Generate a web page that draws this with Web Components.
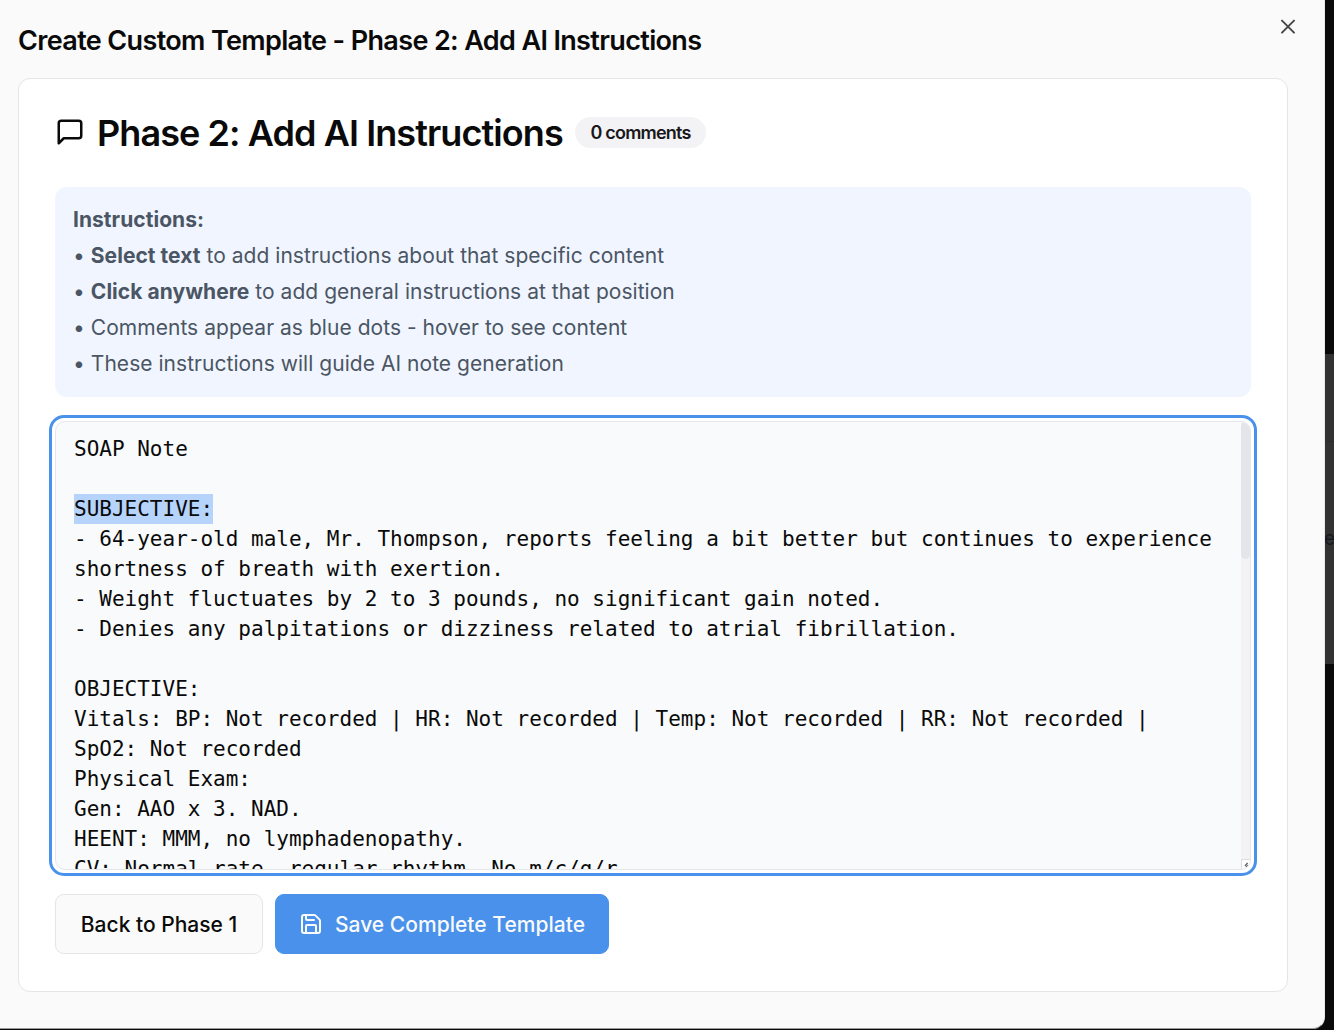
<!DOCTYPE html>
<html lang="en">
<head>
<meta charset="utf-8">
<title>Create Custom Template</title>
<style>
html,body{margin:0;height:1030px;overflow:hidden;background:#0a0a0a;font-family:Inter,"Noto Sans",sans-serif;color:#0a0a0a}
</style>
</head>
<body>
<template-page></template-page>
<script>
const define=(name,html,setup)=>customElements.define(name,class extends HTMLElement{
  connectedCallback(){
    if(this.shadowRoot)return;
    this.attachShadow({mode:"open"}).innerHTML=html;
    if(setup)setup(this);
  }
});

define("ui-icon",`<style>:host{display:block;flex:none}svg{display:block;width:100%;height:100%;fill:none;stroke:currentColor;stroke-width:2;stroke-linecap:round;stroke-linejoin:round}</style><svg viewBox="0 0 24 24"></svg>`,
el=>{
  const shapes={
    close:'<path d="M18 5.6 6 17.6"/><path d="m6 5.6 12 12"/>',
    message:'<path d="M21 15a2 2 0 0 1-2 2H7l-4 4V5a2 2 0 0 1 2-2h14a2 2 0 0 1 2 2z"/>',
    save:'<path d="M15.2 3a2 2 0 0 1 1.4.6l3.8 3.8a2 2 0 0 1 .6 1.4V19a2 2 0 0 1-2 2H5a2 2 0 0 1-2-2V5a2 2 0 0 1 2-2z"/><path d="M17 21v-7a1 1 0 0 0-1-1H8a1 1 0 0 0-1 1v7"/><path d="M7 3v4a1 1 0 0 0 1 1h7"/>'
  };
  el.shadowRoot.querySelector("svg").innerHTML=shapes[el.getAttribute("name")];
});

define("ui-badge",`<style>:host{display:flex;align-items:center;justify-content:center;box-sizing:border-box;width:131px;height:31px;border-radius:16px;background:#f3f3f5;color:#18181b;font-weight:600;font-size:18px;letter-spacing:-.8px;white-space:nowrap}</style><slot></slot>`);

define("ui-button",`<style>
:host{display:flex;align-items:center;justify-content:center;box-sizing:border-box;width:208px;height:60px;border:1px solid #e5e5e5;border-radius:9px;background:#fafafa;font-weight:500;font-size:21px;letter-spacing:0;white-space:nowrap;gap:12px}
:host([primary]){width:334px;background:#4991eb;border-color:#4991eb;color:#fafafa;letter-spacing:.03px}
</style><slot></slot>`);

define("instruction-panel",`<style>
:host{display:block;box-sizing:border-box;height:210px;padding:15px 18px;border-radius:12px;background:#f0f5ff;color:#4b5563;font-size:21px;line-height:36px;letter-spacing:.04px}
::slotted(p){margin:0;white-space:nowrap}
</style><slot></slot>`);

define("note-editor",`<style>
:host{display:flex;box-sizing:border-box;height:461px;margin:0 -6px;border:3px solid #4991eb;border-radius:15px;padding:3px;background:#fff}
.box{flex:1;display:flex;box-sizing:border-box;border:1px solid #e5e7eb;border-radius:10px;background:#f9fafc;overflow:hidden;min-width:0}
.text{flex:1;min-width:0;margin:0;padding:12px 0 0 18px;font:21px/30px "DejaVu Sans Mono",monospace;white-space:pre;overflow:hidden}
.mark{background:#b6d3fb;display:inline-block;height:30px;vertical-align:top}
.bar{width:9px;flex:none;display:flex;flex-direction:column;justify-content:space-between;background:#f3f3f5}
.thumb{height:137px;border-radius:5px;background:#e4e5e9}
svg{display:block;width:9px;height:10px}
</style><div class="box"><div class="text">SOAP Note

<span class="mark">SUBJECTIVE:</span>
- 64-year-old male, Mr. Thompson, reports feeling a bit better but continues to experience
shortness of breath with exertion.
- Weight fluctuates by 2 to 3 pounds, no significant gain noted.
- Denies any palpitations or dizziness related to atrial fibrillation.

OBJECTIVE:
Vitals: BP: Not recorded | HR: Not recorded | Temp: Not recorded | RR: Not recorded |
SpO2: Not recorded
Physical Exam:
Gen: AAO x 3. NAD.
HEENT: MMM, no lymphadenopathy.
CV: Normal rate, regular rhythm. No m/c/g/r.</div><div class="bar"><div class="thumb"></div><svg viewBox="0 0 9 10"><path fill="#fff" d="M0 0h9v10H0z"/><path d="M0 .5h9M.5 0v10" stroke="#ddd"/><path d="m4 7 2.6-3.2M5 8.5l2-2.5" stroke="#555" stroke-width="1.2"/></svg></div></div>`);

define("template-card",`<style>
:host{display:block;box-sizing:border-box;width:1270px;height:914px;margin-left:18px;border:1px solid #e5e5e5;border-radius:12px;background:#fff;padding:33px 36px 0}
header{display:flex;align-items:center;height:42px}
ui-icon{width:30px;height:30px;margin-top:-2px}
ui-badge{margin-top:-2px}
h2{margin:0 0 0 12px;width:478px;font-size:36px;line-height:42px;font-weight:600;letter-spacing:-.92px;white-space:nowrap}
instruction-panel{margin-top:33px}
note-editor{margin-top:18px}
footer{display:flex;gap:12px;margin-top:18px}
ui-button ui-icon{width:24px;height:24px;margin:0}
</style>
<header><ui-icon name="message"></ui-icon><h2>Phase 2: Add AI Instructions</h2><ui-badge>0 comments</ui-badge></header>
<instruction-panel><p><b>Instructions:</b></p><p>• <b>Select text</b> to add instructions about that specific content</p><p>• <b>Click anywhere</b> to add general instructions at that position</p><p>• Comments appear as blue dots - hover to see content</p><p>• These instructions will guide AI note generation</p></instruction-panel>
<note-editor></note-editor>
<footer><ui-button>Back to Phase 1</ui-button><ui-button primary><ui-icon name="save"></ui-icon><span>Save Complete Template</span></ui-button></footer>`);

define("template-dialog",`<style>
:host{display:block;box-sizing:border-box;flex:none;width:1325px;height:1029px;background:#fafafa;border-right:1px solid #e8e8e8;border-bottom:1px solid #999;border-bottom-right-radius:12px}
header{display:flex;justify-content:space-between;height:78px}
h1{margin:23px 0 0 18px;font-size:27px;line-height:36px;font-weight:600;letter-spacing:-.64px;white-space:nowrap}
ui-icon{width:24px;height:24px;margin:15px 24px 0 0;color:#484848}
</style><header><h1>Create Custom Template - Phase 2: Add AI Instructions</h1><ui-icon name="close"></ui-icon></header><template-card></template-card>`);

define("page-backdrop",`<style>
:host{display:block;flex:1;height:1030px;overflow:hidden;background:#0a0a0a;min-width:0}
.card{margin-top:354px;height:310px;box-sizing:border-box;background:#323232;color:#161a1f}
.line{height:88px;box-sizing:border-box;border-bottom:1px solid #2b2b2b}
.txt{font-size:19px;line-height:30px;padding-top:82px;margin-left:-1px;letter-spacing:-1px}
</style><div class="card"><div class="line"></div><div class="txt">e</div></div>`);

define("template-page",`<style>:host{display:flex;width:1334px;height:1030px;overflow:hidden}</style><template-dialog></template-dialog><page-backdrop></page-backdrop>`);
</script>
</body>
</html>
